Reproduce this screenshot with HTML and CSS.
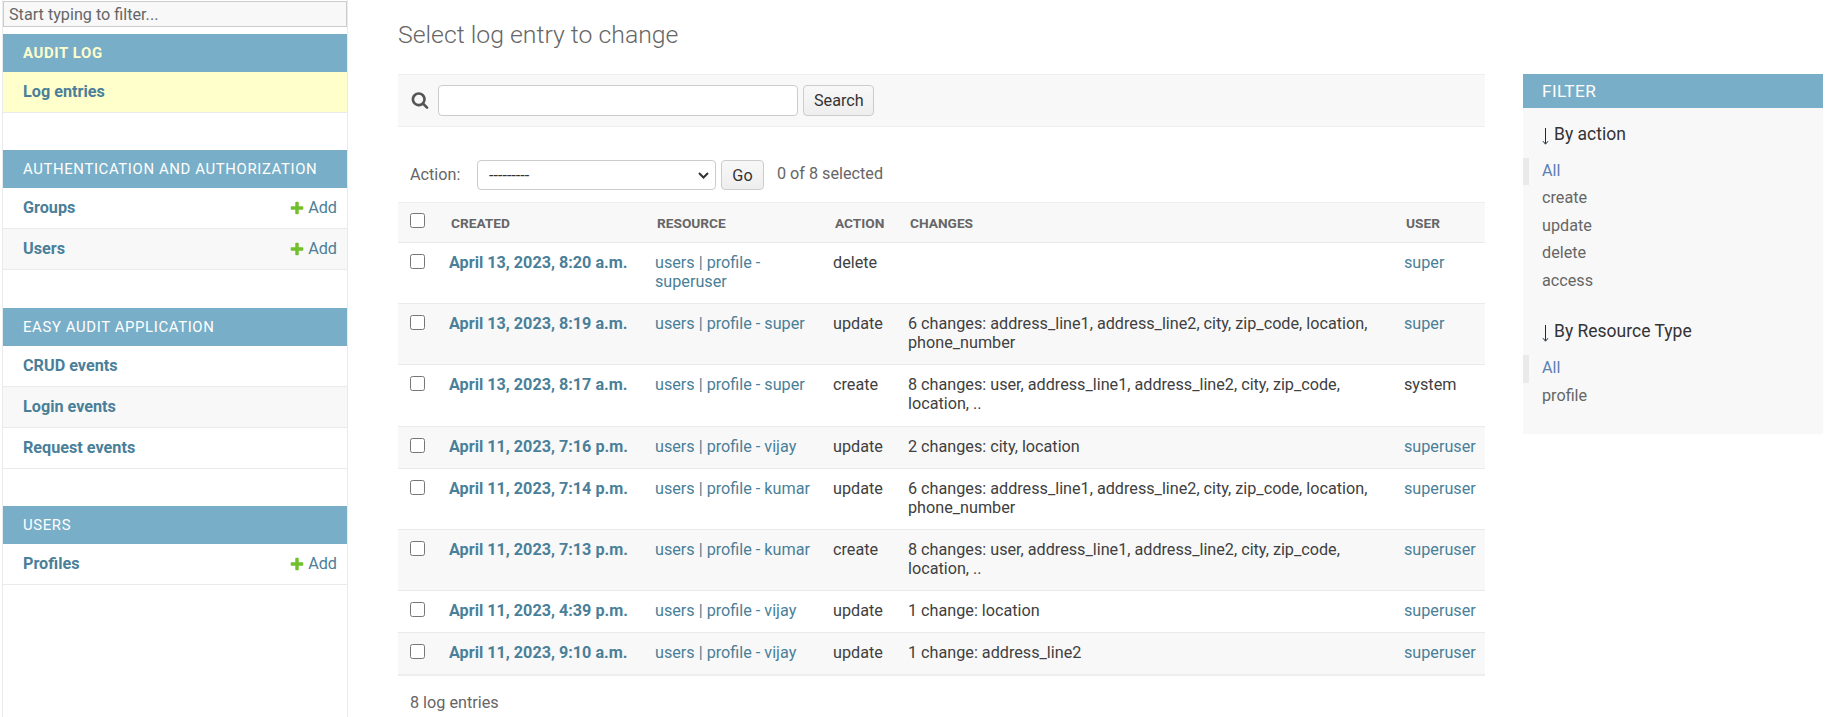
FILE: index.html
```html
<!DOCTYPE html>
<html lang="en">
<head>
    <meta charset="UTF-8">
    <meta name="viewport" content="width=device-width, initial-scale=1.0">
    <title>Select log entry to change</title>
    <link rel="stylesheet" href="styles.css">
</head>
<body>
    <div class="page">
        <nav class="sidebar">
            <input class="nav-filter" type="text" placeholder="Start typing to filter...">

            <div class="app-group">
                <div class="caption current">AUDIT LOG</div>
                <div class="nav-row selected"><a href="#">Log entries</a></div>
            </div>

            <div class="app-group">
                <div class="caption">AUTHENTICATION AND AUTHORIZATION</div>
                <div class="nav-row"><a href="#">Groups</a>
                    <a class="add-link" href="#"><svg class="add-icon" viewBox="0 0 1792 1792"><path d="M1600 796v192q0 40-28 68t-68 28h-416v416q0 40-28 68t-68 28h-192q-40 0-68-28t-28-68v-416h-416q-40 0-68-28t-28-68v-192q0-40 28-68t68-28h416v-416q0-40 28-68t68-28h192q40 0 68 28t28 68v416h416q40 0 68 28t28 68z"/></svg>Add</a>
                </div>
                <div class="nav-row alt"><a href="#">Users</a>
                    <a class="add-link" href="#"><svg class="add-icon" viewBox="0 0 1792 1792"><path d="M1600 796v192q0 40-28 68t-68 28h-416v416q0 40-28 68t-68 28h-192q-40 0-68-28t-28-68v-416h-416q-40 0-68-28t-28-68v-192q0-40 28-68t68-28h416v-416q0-40 28-68t68-28h192q40 0 68 28t28 68v416h416q40 0 68 28t28 68z"/></svg>Add</a>
                </div>
            </div>

            <div class="app-group">
                <div class="caption">EASY AUDIT APPLICATION</div>
                <div class="nav-row"><a href="#">CRUD events</a></div>
                <div class="nav-row alt"><a href="#">Login events</a></div>
                <div class="nav-row"><a href="#">Request events</a></div>
            </div>

            <div class="app-group">
                <div class="caption">USERS</div>
                <div class="nav-row"><a href="#">Profiles</a>
                    <a class="add-link" href="#"><svg class="add-icon" viewBox="0 0 1792 1792"><path d="M1600 796v192q0 40-28 68t-68 28h-416v416q0 40-28 68t-68 28h-192q-40 0-68-28t-28-68v-416h-416q-40 0-68-28t-28-68v-192q0-40 28-68t68-28h416v-416q0-40 28-68t68-28h192q40 0 68 28t28 68v416h416q40 0 68 28t28 68z"/></svg>Add</a>
                </div>
            </div>
        </nav>

        <main class="content">
            <h1>Select log entry to change</h1>
            <div class="content-columns">
                <div class="changelist">
                    <div class="toolbar">
                        <svg class="search-icon" viewBox="0 0 1792 1792"><path d="M1216 832q0-185-131.5-316.5t-316.5-131.5-316.5 131.5-131.5 316.5 131.5 316.5 316.5 131.5 316.5-131.5 131.5-316.5zm512 832q0 52-38 90t-90 38q-54 0-90-38l-343-342q-179 124-399 124-143 0-273.5-55.5t-225-150-150-225-55.5-273.5 55.5-273.5 150-225 225-150 273.5-55.5 273.5 55.5 225 150 150 225 55.5 273.5q0 220-124 399l343 343q37 37 37 90z"/></svg>
                        <input class="search-input" type="text">
                        <button class="btn search-btn">Search</button>
                    </div>

                    <div class="actions">
                        <label class="action-label">Action:</label>
                        <select class="action-select"><option>---------</option></select>
                        <button class="btn go-btn">Go</button>
                        <span class="action-counter">0 of 8 selected</span>
                    </div>

                    <table class="results">
                        <colgroup>
                            <col class="col-check"><col class="col-created"><col class="col-resource"><col class="col-action"><col class="col-changes"><col class="col-user">
                        </colgroup>
                        <thead>
                            <tr>
                                <th><input type="checkbox"></th>
                                <th>CREATED</th>
                                <th>RESOURCE</th>
                                <th>ACTION</th>
                                <th>CHANGES</th>
                                <th>USER</th>
                            </tr>
                        </thead>
                        <tbody>
                            <tr>
                                <td><input type="checkbox"></td>
                                <td><a class="entry" href="#">April 13, 2023, 8:20 a.m.</a></td>
                                <td><a href="#">users | profile - superuser</a></td>
                                <td>delete</td>
                                <td></td>
                                <td><a href="#">super</a></td>
                            </tr>
                            <tr>
                                <td><input type="checkbox"></td>
                                <td><a class="entry" href="#">April 13, 2023, 8:19 a.m.</a></td>
                                <td><a href="#">users | profile - super</a></td>
                                <td>update</td>
                                <td>6 changes: address_line1, address_line2, city, zip_code, location, phone_number</td>
                                <td><a href="#">super</a></td>
                            </tr>
                            <tr>
                                <td><input type="checkbox"></td>
                                <td><a class="entry" href="#">April 13, 2023, 8:17 a.m.</a></td>
                                <td><a href="#">users | profile - super</a></td>
                                <td>create</td>
                                <td>8 changes: user, address_line1, address_line2, city, zip_code, location, ..</td>
                                <td>system</td>
                            </tr>
                            <tr>
                                <td><input type="checkbox"></td>
                                <td><a class="entry" href="#">April 11, 2023, 7:16 p.m.</a></td>
                                <td><a href="#">users | profile - vijay</a></td>
                                <td>update</td>
                                <td>2 changes: city, location</td>
                                <td><a href="#">superuser</a></td>
                            </tr>
                            <tr>
                                <td><input type="checkbox"></td>
                                <td><a class="entry" href="#">April 11, 2023, 7:14 p.m.</a></td>
                                <td><a href="#">users | profile - kumar</a></td>
                                <td>update</td>
                                <td>6 changes: address_line1, address_line2, city, zip_code, location, phone_number</td>
                                <td><a href="#">superuser</a></td>
                            </tr>
                            <tr>
                                <td><input type="checkbox"></td>
                                <td><a class="entry" href="#">April 11, 2023, 7:13 p.m.</a></td>
                                <td><a href="#">users | profile - kumar</a></td>
                                <td>create</td>
                                <td>8 changes: user, address_line1, address_line2, city, zip_code, location, ..</td>
                                <td><a href="#">superuser</a></td>
                            </tr>
                            <tr>
                                <td><input type="checkbox"></td>
                                <td><a class="entry" href="#">April 11, 2023, 4:39 p.m.</a></td>
                                <td><a href="#">users | profile - vijay</a></td>
                                <td>update</td>
                                <td>1 change: location</td>
                                <td><a href="#">superuser</a></td>
                            </tr>
                            <tr>
                                <td><input type="checkbox"></td>
                                <td><a class="entry" href="#">April 11, 2023, 9:10 a.m.</a></td>
                                <td><a href="#">users | profile - vijay</a></td>
                                <td>update</td>
                                <td>1 change: address_line2</td>
                                <td><a href="#">superuser</a></td>
                            </tr>
                        </tbody>
                    </table>

                    <p class="paginator">8 log entries</p>
                </div>

                <aside class="filter">
                    <h2>FILTER</h2>
                    <h3><svg class="sort-arrow" viewBox="0 0 7 17"><path d="M3.5 0v15.5M1 13.2l2.5 3 2.5-3"/></svg>By action</h3>
                    <ul>
                        <li class="chosen"><a href="#">All</a></li>
                        <li><a href="#">create</a></li>
                        <li><a href="#">update</a></li>
                        <li><a href="#">delete</a></li>
                        <li><a href="#">access</a></li>
                    </ul>
                    <h3><svg class="sort-arrow" viewBox="0 0 7 17"><path d="M3.5 0v15.5M1 13.2l2.5 3 2.5-3"/></svg>By Resource Type</h3>
                    <ul>
                        <li class="chosen"><a href="#">All</a></li>
                        <li><a href="#">profile</a></li>
                    </ul>
                </aside>
            </div>
        </main>
    </div>
</body>
</html>
```

FILE: styles.css
```css
* {
    box-sizing: border-box;
}
body {
    margin: 0;
    font-family: Roboto, "Liberation Sans", sans-serif;
    font-size: 16.2px;
    line-height: 20px;
    color: #404040;
    background-color: #fff;
    overflow: hidden;
}
a {
    color: #4a7f99;
    text-decoration: none;
}
.page {
    display: flex;
    height: 717px;
}

/* sidebar */
.sidebar {
    width: 346px;
    flex-shrink: 0;
    margin-left: 2px;
    padding-top: 1px;
    border-left: 1px solid #eaeaea;
    border-right: 1px solid #eaeaea;
}
.nav-filter {
    display: block;
    width: 344px;
    height: 26px;
    margin-bottom: 7px;
    padding: 2px 5px;
    border: 1px solid #ccc;
    background-color: #f8f8f8;
    font-family: inherit;
    font-size: 16.2px;
    color: #333;
}
.nav-filter::placeholder {
    color: #666;
}
.app-group {
    margin-bottom: 37.4px;
}
.caption {
    height: 38px;
    padding: 9px 20px 0;
    background-color: #79aec8;
    color: #fff;
    font-size: 14.9px;
    letter-spacing: 0.63px;
}
.caption.current {
    color: #ffc;
    font-weight: 700;
}
.nav-row {
    display: flex;
    justify-content: space-between;
    height: 41px;
    padding: 10px 10px 0 20px;
    border-bottom: 1px solid #eaeaea;
}
.nav-row > a:first-child {
    font-weight: 700;
}
.nav-row.alt {
    background-color: #f8f8f8;
}
.nav-row.selected {
    background-color: #ffc;
}
.add-link {
    display: flex;
    align-items: center;
    height: 20px;
}
.add-icon {
    width: 16px;
    height: 16px;
    margin-right: 3px;
    fill: #70bf2b;
}

/* main column */
.content {
    flex: 1;
    padding: 21px 10px 0 50px;
    min-width: 0;
}
h1 {
    margin: 0 0 25px;
    font-size: 24.8px;
    line-height: 28px;
    font-weight: 300;
    color: #666;
}
.content-columns {
    display: flex;
    align-items: flex-start;
    gap: 38px;
}
.changelist {
    width: 1087px;
}
.toolbar {
    display: flex;
    align-items: center;
    height: 53px;
    padding-left: 13px;
    background-color: #f8f8f8;
    border-top: 1px solid #eee;
    border-bottom: 1px solid #eee;
}
.search-icon {
    width: 18px;
    height: 18px;
    margin-right: 9px;
    margin-bottom: 2px;
    fill: #555;
}
.search-input {
    width: 360px;
    height: 31px;
    border: 1px solid #ccc;
    border-radius: 4px;
    background-color: #fff;
}
.btn {
    height: 31px;
    margin-left: 5px;
    padding: 0 10px;
    border: 1px solid #ccc;
    border-radius: 4px;
    background: linear-gradient(#f8f8f8, #eee);
    font-family: inherit;
    font-size: 16.2px;
    color: #333;
}
.search-btn {
    width: 71px;
}
.actions {
    display: flex;
    align-items: center;
    height: 30px;
    margin-top: 33px;
    margin-bottom: 12px;
    padding-left: 12px;
}
.action-label {
    width: 67px;
    color: #666;
}
.action-select {
    appearance: none;
    width: 239px;
    height: 30px;
    padding-left: 11px;
    border: 1px solid #ccc;
    border-radius: 4px;
    background: #fff url("data:image/svg+xml,%3Csvg xmlns='http://www.w3.org/2000/svg' width='11' height='7'%3E%3Cpath d='M1 1l4.5 4.5L10 1' fill='none' stroke='%23333' stroke-width='2'/%3E%3C/svg%3E") no-repeat right 6px center;
    font-family: inherit;
    font-size: 16.2px;
    color: #333;
}
.go-btn {
    width: 43px;
    height: 30px;
    padding: 0;
}
.action-counter {
    margin-left: 13px;
    margin-top: -2px;
    color: #666;
}

/* results table */
.results {
    width: 100%;
    table-layout: fixed;
    border-collapse: collapse;
}
.col-check { width: 43px; }
.col-created { width: 206px; }
.col-resource { width: 178px; }
.col-action { width: 75px; }
.col-changes { width: 496px; }
.col-user { width: 89px; }
.results th {
    height: 40px;
    padding: 0 10px;
    text-align: left;
    font-size: 13.7px;
    font-weight: 700;
    color: #666;
    background-color: #f8f8f8;
    border-top: 1px solid #eee;
    border-bottom: 1px solid #eaeaea;
}
.results th:first-child,
.results td:first-child {
    padding: 0 0 0 12px;
}
.results td {
    padding: 10px 8px 12px;
    line-height: 19.1px;
    vertical-align: top;
    border-bottom: 1px solid #eaeaea;
}
.results input[type="checkbox"] {
    display: block;
    width: 15px;
    height: 15px;
    margin: 0;
}
.results td input[type="checkbox"] {
    margin-top: 11px;
}
.results th input[type="checkbox"] {
    margin-top: -4px;
}
.results tbody tr:nth-child(even) {
    background-color: #f8f8f8;
}
.results tbody tr:last-child td {
    border-bottom: 2px solid #eee;
}
.entry {
    font-weight: 700;
}
.paginator {
    margin: 17px 0 0;
    padding-left: 12px;
    color: #666;
}

/* filter panel */
.filter {
    width: 300px;
    height: 360px;
    background-color: #f8f8f8;
}
.filter h2 {
    height: 34px;
    margin: 0;
    padding: 7px 19px 0;
    background-color: #79aec8;
    color: #fff;
    font-size: 17.2px;
    font-weight: 400;
    letter-spacing: 0.4px;
}
.filter h3 {
    margin: 15.5px 0 13px;
    padding-left: 19px;
    font-size: 17.5px;
    line-height: 20px;
    font-weight: 400;
    color: #333;
}
.sort-arrow {
    width: 7px;
    height: 17px;
    margin-right: 5px;
    vertical-align: -5px;
    fill: none;
    stroke: #1c2b3a;
    stroke-width: 1;
}
.filter ul {
    margin: 0 0 26px;
    padding: 0;
    list-style: none;
}
.filter li {
    height: 27.5px;
    padding: 3px 19px 0;
}
.filter li a {
    color: #666;
}
.filter li.chosen {
    border-left: 6px solid #eaeaea;
    padding-left: 13px;
}
.filter li.chosen a {
    color: #5b80b2;
}
```
